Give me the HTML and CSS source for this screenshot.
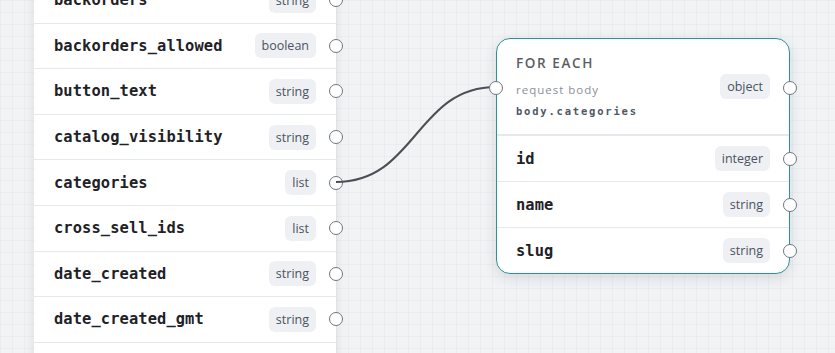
FILE: index.html
```html
<!DOCTYPE html>
<html>
<head>
<meta charset="utf-8">
<link rel="stylesheet" href="styles.css">
</head>
<body>
<div class="canvas">
  <div class="node node-source">
    <div class="row"><span class="field">backorders</span><span class="badge">string</span><span class="handle"></span></div>
    <div class="row"><span class="field">backorders_allowed</span><span class="badge">boolean</span><span class="handle"></span></div>
    <div class="row"><span class="field">button_text</span><span class="badge">string</span><span class="handle"></span></div>
    <div class="row"><span class="field">catalog_visibility</span><span class="badge">string</span><span class="handle"></span></div>
    <div class="row"><span class="field">categories</span><span class="badge">list</span><span class="handle"></span></div>
    <div class="row"><span class="field">cross_sell_ids</span><span class="badge">list</span><span class="handle"></span></div>
    <div class="row"><span class="field">date_created</span><span class="badge">string</span><span class="handle"></span></div>
    <div class="row"><span class="field">date_created_gmt</span><span class="badge">string</span><span class="handle"></span></div>
    <div class="row"><span class="field">date_modified</span><span class="badge">string</span><span class="handle"></span></div>
  </div>

  <svg class="edges" width="835" height="353" viewBox="0 0 835 353">
    <path d="M336 182 C 416 182, 416 87, 496 87" fill="none" stroke="#4b4f55" stroke-width="2"/>
  </svg>

  <div class="node node-loop">
    <div class="loop-head">
      <div class="loop-info">
        <div class="loop-title">FOR EACH</div>
        <div class="loop-sub">request body</div>
        <div class="loop-path">body.categories</div>
      </div>
      <span class="badge">object</span>
      <span class="handle handle-in"></span>
      <span class="handle"></span>
    </div>
    <div class="row"><span class="field">id</span><span class="badge">integer</span><span class="handle"></span></div>
    <div class="row"><span class="field">name</span><span class="badge">string</span><span class="handle"></span></div>
    <div class="row row-last"><span class="field">slug</span><span class="badge">string</span><span class="handle"></span></div>
  </div>
</div>
</body>
</html>
```
FILE: styles.css
```css
html, body {
  margin: 0;
  padding: 0;
  width: 835px;
  height: 353px;
  overflow: hidden;
}

.canvas {
  position: relative;
  width: 835px;
  height: 353px;
  overflow: hidden;
  background-color: #f1f3f5;
  background-image:
    linear-gradient(to right, rgba(200, 206, 214, 0.16) 1px, transparent 1px),
    linear-gradient(to bottom, rgba(200, 206, 214, 0.16) 1px, transparent 1px);
  background-size: 12px 12px;
}

.node {
  position: absolute;
  background: #ffffff;
  box-sizing: border-box;
}

.node-source {
  left: 34px;
  top: -22px;
  width: 302px;
  box-shadow: 0 2px 10px rgba(30, 40, 60, 0.10);
}

.node-loop {
  left: 496px;
  top: 38px;
  width: 294px;
  border: 1px solid #2d9198;
  border-radius: 14px;
  box-shadow: 0 4px 14px rgba(30, 40, 60, 0.12);
}

.row {
  position: relative;
  display: flex;
  align-items: center;
  justify-content: space-between;
  height: 45.6px;
  box-sizing: border-box;
  padding: 0 20px 0 20px;
  border-bottom: 1px solid #e5e8ec;
}

.node-loop .row {
  height: 46px;
  padding: 0 19px 0 19px;
}

.node-loop .row-last {
  border-bottom: none;
  height: 45px;
}

.field {
  font-family: "DejaVu Sans Mono", "Liberation Mono", monospace;
  font-weight: 700;
  font-size: 15.4px;
  color: #1e2227;
  letter-spacing: 0.1px;
}

.badge {
  display: inline-flex;
  align-items: center;
  height: 25px;
  padding: 0 7px;
  border-radius: 6px;
  background: #eef0f3;
  color: #4a5361;
  font-family: "Open Sans", "Noto Sans", sans-serif;
  font-size: 12.5px;
  letter-spacing: 0;
}

.handle {
  position: absolute;
  right: -7px;
  top: 50%;
  width: 12px;
  height: 12px;
  margin-top: -7px;
  border: 1px solid #6e7682;
  border-radius: 50%;
  background: #ffffff;
}

.node-loop .handle {
  right: -8px;
}

.edges {
  position: absolute;
  left: 0;
  top: 0;
  pointer-events: none;
}

.loop-head {
  position: relative;
  display: flex;
  align-items: center;
  justify-content: space-between;
  height: 97px;
  box-sizing: border-box;
  padding: 0 19px 0 19px;
  border-bottom: 2px solid #e5e8ec;
}

.loop-info {
  align-self: flex-start;
  display: flex;
  flex-direction: column;
  padding-top: 16px;
}

.loop-title {
  font-family: "Open Sans", "Noto Sans", sans-serif;
  font-weight: 600;
  font-size: 13.5px;
  letter-spacing: 1.6px;
  color: #5a5e64;
  line-height: 16px;
}

.loop-sub {
  margin-top: 12px;
  font-family: "Open Sans", "Noto Sans", sans-serif;
  font-size: 11.5px;
  letter-spacing: 1px;
  color: #8a9099;
  line-height: 14px;
}

.loop-path {
  margin-top: 7px;
  font-family: "DejaVu Sans Mono", "Liberation Mono", monospace;
  font-weight: 700;
  font-size: 10.5px;
  letter-spacing: 1.8px;
  color: #4f5866;
  line-height: 14px;
}

.loop-head .handle {
  top: 49px;
}

.loop-head .handle-in {
  right: auto;
  left: -8px;
}
```
